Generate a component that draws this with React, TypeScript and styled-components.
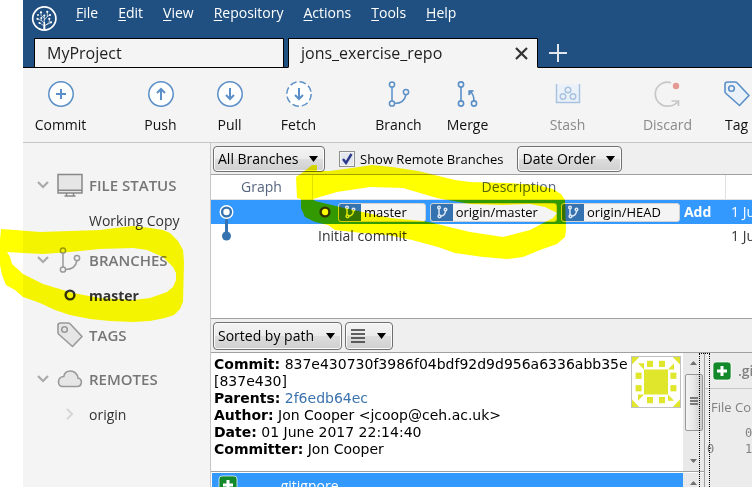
import React from "react";
import styled, { createGlobalStyle, css } from "styled-components";

const ui = '"Open Sans", "Noto Sans", sans-serif';

const Global = createGlobalStyle`
  *, *::before, *::after { box-sizing: border-box; }
  body { margin: 0; background: #fff; overflow: hidden; font-family: ${ui}; font-size: 14px; color: #1e1e1e; }
  button, select, input { font: inherit; color: inherit; margin: 0; }
  button { padding: 0; border: 0; background: none; }
  h2, p { margin: 0; padding: 0; }
  svg { display: block; flex: none; }
`;

/* ---------- frame ---------- */
const Page = styled.div`
  position: relative;
  height: 100vh;
  padding-left: 23px;
`;
const Window = styled.div`
  height: 100%;
  display: flex;
  flex-direction: column;
  overflow: hidden;
  background: #f4f4f4;
`;
const TitleBar = styled.header`
  flex: none;
  background: #205081;
  display: flex;
  flex-direction: column;
  height: 68px;
`;
const MenuBar = styled.nav`
  display: flex;
  height: 38px;
  padding-left: 8px;
  gap: 20px;
`;
const Logo = styled.div`
  width: 25px;
  padding-top: 5px;
`;
const MenuItem = styled.button`
  height: 26px;
  color: #fff;
  font-size: 14px;
  line-height: 26px;
  &::first-letter { text-decoration: underline; text-underline-offset: 2px; }
`;
const TabStrip = styled.div`
  flex: 1;
  display: flex;
  align-items: stretch;
  gap: 4px;
  padding-left: 11px;
  box-shadow: inset 0 -1px 0 #000;
`;
const Tab = styled.div<{ $active?: boolean }>`
  width: 250px;
  display: flex;
  align-items: center;
  justify-content: space-between;
  padding: 0 9px 0 12px;
  border: 1px solid #000;
  border-bottom-color: ${(p) => (p.$active ? "#f4f4f4" : "#000")};
  background: #f4f4f4;
`;
const TabLabel = styled.button`
  font-size: 16px;
  line-height: 24px;
`;
const AddTab = styled.button`
  width: 20px;
  margin-left: 6px;
  display: flex;
  align-items: center;
  justify-content: center;
`;

/* ---------- toolbar ---------- */
const Toolbar = styled.div`
  flex: none;
  display: flex;
  gap: 31px;
  height: 75px;
  padding-left: 3px;
  border-bottom: 1px solid #c6c6c6;
`;
const ToolGroup = styled.div`
  display: flex;
  flex: none;
`;
const Tool = styled.button`
  width: 69px;
  flex: none;
  display: flex;
  flex-direction: column;
  align-items: center;
  padding-top: 12px;
  gap: 7px;
  line-height: 20px;
  color: #111;
  &:disabled { color: #8a8a8a; }
`;

/* ---------- sidebar ---------- */
const Body = styled.div`
  flex: 1;
  min-height: 0;
  display: flex;
`;
const Sidebar = styled.aside`
  width: 188px;
  flex: none;
  display: flex;
  flex-direction: column;
  gap: 5px;
  padding: 24px 0 0 12px;
  border-right: 1px solid #c6c6c6;
  & > section:last-child { margin-top: 3px; }
`;
const SideHeader = styled.h2`
  display: grid;
  grid-template-columns: 16px 28px 1fr;
  column-gap: 5px;
  align-items: center;
  justify-items: center;
  height: 36px;
  font-size: 15px;
  font-weight: 600;
  color: #767676;
  & > span { justify-self: start; }
`;
const SideItem = styled.button<{ $current?: boolean }>`
  display: grid;
  grid-template-columns: 16px 28px 1fr;
  column-gap: 5px;
  align-items: center;
  justify-items: center;
  width: 100%;
  height: 34px;
  color: #333;
  font-weight: ${(p) => (p.$current ? 700 : 400)};
  & > span { grid-column: 3; justify-self: start; }
  & > svg { grid-column: 2; }
`;

/* ---------- main ---------- */
const Main = styled.main`
  flex: 1;
  min-width: 0;
  display: flex;
  flex-direction: column;
  background: #fff;
`;
const OptionBar = styled.div<{ $tall?: boolean }>`
  flex: none;
  display: flex;
  align-items: center;
  gap: ${(p) => (p.$tall ? "3px" : "14px")};
  height: ${(p) => (p.$tall ? "35px" : "32px")};
  padding-left: 2px;
  background: #efefef;
  border-bottom: 1px solid #a0a0a0;
  ${(p) => p.$tall && css`border-top: 1px solid #a0a0a0;`}
`;
const control = css`
  border: 1px solid #707070;
  border-radius: 4px;
  background: linear-gradient(#f4f4f4 0%, #ebebeb 49%, #dddddd 51%, #cfcfcf 100%);
  box-shadow: inset 0 0 0 1px #fbfbfb;
  color: #000;
`;
const DropDown = styled.span<{ $w: number }>`
  display: grid;
  width: ${(p) => p.$w}px;
  align-items: center;
  & > * { grid-area: 1 / 1; }
  & > svg { justify-self: end; margin-right: 7px; pointer-events: none; }
`;
const Select = styled.select<{ $tall?: boolean }>`
  ${control}
  appearance: none;
  width: 100%;
  height: ${(p) => (p.$tall ? "28px" : "26px")};
  padding: 0 4px;
  font-size: 14px;
`;
const ListButton = styled.button`
  ${control}
  display: flex;
  align-items: center;
  gap: 12px;
  height: 28px;
  padding: 0 6px 0 5px;
`;
const CheckLabel = styled.label`
  display: flex;
  align-items: center;
  gap: 5px;
  font-size: 13px;
  color: #000;
`;
const CheckBox = styled.span`
  display: grid;
  place-items: center;
  & > * { grid-area: 1 / 1; }
  & > svg { pointer-events: none; }
  input {
    appearance: none;
    width: 16px;
    height: 16px;
    border: 1px solid #8e8f8f;
    background: #e4e8ee;
    box-shadow: inset 0 0 0 1px #f4f4f4;
  }
`;

const ListArea = styled.div`
  flex: 1;
  min-height: 0;
  overflow: hidden;
`;
const CommitTable = styled.table`
  width: 100%;
  table-layout: fixed;
  border-collapse: separate;
  border-spacing: 0;
  th, td { padding: 0; overflow: hidden; white-space: nowrap; text-align: left; }
  th {
    height: 25px;
    border-right: 1px solid #e0e0e0;
    border-bottom: 1px solid #e0e0e0;
    font-weight: 400;
    text-align: center;
    color: #56657f;
    line-height: 24px;
  }
  th:last-child { border-right: 0; }
`;
const CommitRow = styled.tr<{ $selected?: boolean }>`
  background: ${(p) => (p.$selected ? "#3399ff" : "#fff")};
  color: ${(p) => (p.$selected ? "#fff" : "#333")};
  td { height: 24px; line-height: 24px; }
  td:last-child { padding-left: 5px; }
`;
const Message = styled.div<{ $refs?: boolean }>`
  display: flex;
  align-items: center;
  gap: 4px;
  height: 24px;
  padding-left: ${(p) => (p.$refs ? "6px" : "5px")};
  margin-right: 8px;
  overflow: hidden;
  strong { flex: none; }
  & > svg { margin-right: 3px; }
`;
const Ref = styled.span`
  flex: none;
  display: flex;
  align-items: center;
  gap: 3px;
  height: 19px;
  padding-right: 18px;
  border: 1px solid #d2d2d2;
  border-radius: 3px;
  background: #f4f4f4;
  color: #000;
  font-size: 13px;
  line-height: 17px;
  overflow: hidden;
`;
const RefIcon = styled.span`
  display: flex;
  align-items: center;
  justify-content: center;
  width: 22px;
  height: 19px;
  background: #3572b0;
`;

const LowerWrap = styled.div`
  position: relative;
  flex: none;
`;
const Lower = styled.div`
  display: flex;
  height: 134px;
`;
const DetailSide = styled.div`
  flex: 1;
  min-width: 0;
  display: flex;
  flex-direction: column;
  border-right: 1px solid #a0a0a0;
`;
const Detail = styled.section`
  flex: none;
  display: flex;
  height: 119px;
  border-bottom: 1px solid #a0a0a0;
`;
const DetailText = styled.div`
  flex: 1;
  min-width: 0;
  padding: 3px 0 0 3px;
  font-family: "DejaVu Sans", Verdana, sans-serif;
  font-size: 14px;
  line-height: 17px;
  color: #000;
  a { color: #3b73af; text-decoration: none; }
`;
const Avatar = styled.div`
  flex: none;
  width: 50px;
  height: 52px;
  margin: 3px 2px 0 0;
  border: 1px solid #c0c0c0;
`;
const ScrollBar = styled.div`
  flex: none;
  width: 21px;
  display: flex;
  flex-direction: column;
  align-items: center;
  justify-content: space-between;
  padding: 8px 1px;
  background: #e9e9e9;
`;
const Thumb = styled.div`
  width: 18px;
  height: 57px;
  margin: 4px 0 24px;
  display: flex;
  align-items: center;
  justify-content: center;
  border: 1px solid #989898;
  border-radius: 2px;
  background: linear-gradient(90deg, #f5f5f5, #e6e6e6 50%, #cbcbcb);
`;
const FileList = styled.div`
  flex: 1;
  display: flex;
  padding: 1px 0 0 1px;
  overflow: hidden;
`;
const FileRow = styled.button`
  flex: 1;
  height: 24px;
  display: flex;
  align-items: center;
  gap: 39px;
  padding-left: 6px;
  background: #3399ff;
  color: #fff;
  font-size: 14px;
`;
const DiffSide = styled.section`
  flex: none;
  width: 47px;
  background: #ececec;
  color: #808080;
  overflow: hidden;
  white-space: nowrap;
`;
const Splitter = styled.div`
  position: absolute;
  right: 42px;
  bottom: 0;
  width: 11px;
  height: 134px;
  border: 1px dotted #000;
  border-bottom: 0;
`;
const DiffHeader = styled.div`
  display: flex;
  align-items: center;
  gap: 6px;
  height: 36px;
  padding-left: 7px;
  border-bottom: 1px solid #c6c6c6;
  font-size: 14px;
  font-weight: 600;
`;
const DiffCaption = styled.p`
  padding: 8px 0 0 6px;
  font-size: 13px;
  line-height: 20px;
`;
const DiffLines = styled.div`
  display: grid;
  grid-template-columns: 38px 1fr;
  padding: 8px 0 0 2px;
  font-family: "DejaVu Sans Mono", monospace;
  font-size: 12px;
  line-height: 16px;
`;
const Marker = styled.svg`
  position: absolute;
  left: 0;
  top: 0;
  mix-blend-mode: multiply;
  pointer-events: none;
`;

/* ---------- icons ---------- */
const blue = "#5b8fc7";

const LogoIcon = () => (
  <svg width="26" height="27" viewBox="0 0 26 27" fill="none" stroke="#fff" strokeLinecap="round">
    <circle cx="13.300" cy="13.500" r="11.600" strokeWidth="1.700" />
    <g strokeWidth="0.800" strokeOpacity="0.850">
      <path d="M13.300 24V11M13.300 21L8.700 18M13.300 18l-3-2.500v-2M10.300 15.500L6.700 14M13.300 13L10 10.500v-3M13.300 15l3-3.500V7M13.300 21l5-3.500V14M15 20l5-2.500M16.300 11.500l2.500-1.500" />
    </g>
    <g fill="#fff" stroke="none">
      <circle cx="10" cy="7.300" r="1.100" /><circle cx="16.300" cy="6.800" r="1.100" />
      <circle cx="13.300" cy="10.500" r="1.100" /><circle cx="19" cy="10" r="1.100" />
      <circle cx="6.500" cy="13.800" r="1.100" /><circle cx="10.300" cy="13" r="1" />
      <circle cx="8.500" cy="18" r="1.100" /><circle cx="18.300" cy="13.800" r="1.100" />
      <circle cx="20" cy="17.300" r="1.100" /><circle cx="7" cy="10" r="0.900" />
      <path d="M12.700 17h1.300l.5 7.500h-2.300z" />
    </g>
  </svg>
);
const RoundIcon = ({ kind }: { kind: "plus" | "up" | "down" | "fetch" }) => (
  <svg width="28" height="28" viewBox="0 0 28 28" fill="none" stroke={blue}>
    <circle cx="14" cy="14" r="12.200" fill="#fff" strokeWidth="1.500" strokeDasharray={kind === "fetch" ? "6.600 3" : undefined} />
    <path
      strokeWidth="2"
      d={kind === "plus" ? "M14 9v10M9 14h10" : kind === "up" ? "M14 20V9.500M10 13l4-4 4 4" : "M14 8v10.500M10 15l4 4 4-4"}
    />
  </svg>
);
const BranchIcon = ({ color = blue }: { color?: string }) => (
  <svg width="28" height="28" viewBox="0 0 28 28" fill="none" stroke={color} strokeWidth="1.500">
    <circle cx="7" cy="4.500" r="2.600" />
    <circle cx="7" cy="23.500" r="2.600" />
    <circle cx="21" cy="12" r="2.600" />
    <path d="M7 7v14M9.600 23.500c6.400 0 10.400-3.500 11.400-9" />
  </svg>
);
const SmallBranchIcon = () => (
  <svg width="14" height="14" viewBox="0 0 14 14" fill="none" stroke="#dfe9f5" strokeWidth="1.500">
    <circle cx="4" cy="2.500" r="1.300" />
    <circle cx="4.500" cy="11.300" r="1.400" />
    <circle cx="10.500" cy="4.500" r="1.300" />
    <path d="M4 4v6M6 11c3-.300 4.300-2 4.500-5" />
  </svg>
);
const MergeIcon = () => (
  <svg width="28" height="28" viewBox="0 0 28 28" fill="none" stroke={blue} strokeWidth="1.600">
    <circle cx="7" cy="4.500" r="2.600" />
    <circle cx="7" cy="23.500" r="2.600" />
    <circle cx="20" cy="23.500" r="2.600" />
    <path d="M7 7v14M20 21c0-4-1-7-3.500-9.500" />
    <path d="M14.500 15.500v-5h5z" fill={blue} stroke="none" />
    <path d="M15.500 15v-4h4" />
  </svg>
);
const StashIcon = () => (
  <svg width="28" height="28" viewBox="0 0 28 28" fill="none" stroke="#a9c3df" strokeWidth="1.500">
    <path d="M2.500 4v18.500h23V4" fill="#eaf1f9" />
    <circle cx="14" cy="10" r="2.800" />
    <circle cx="9" cy="16.500" r="2.800" />
    <circle cx="19" cy="16.500" r="2.800" />
  </svg>
);
const DiscardIcon = () => (
  <svg width="28" height="28" viewBox="0 0 28 28" fill="none" stroke="#c6c6c6" strokeWidth="1.700">
    <path d="M17 2.700A12 12 0 1 0 15 26c4 0 7-2 9-4.500" />
    <path d="M17.500 21h7v5" />
    <circle cx="22" cy="6" r="3.200" fill="#e39a92" stroke="none" />
  </svg>
);
const TagIcon = ({ color = blue, fill = "#eaf1f9" }: { color?: string; fill?: string }) => (
  <svg width="28" height="28" viewBox="0 0 28 28" fill={fill} stroke={color} strokeWidth="1.600" strokeLinejoin="round">
    <path d="M2 4.500C2 3 3 2 4.500 2H12c1 0 1.600.300 2.300 1L26 15.500 16.500 25.500 3 13.500c-.700-.600-1-1.300-1-2.300z" />
    <circle cx="8.500" cy="8.500" r="2.800" />
  </svg>
);
const Chevron = () => (
  <svg width="12" height="8" viewBox="0 0 12 8" fill="none" stroke="#aaa" strokeWidth="2.200"><path d="M1 1l5 5 5-5" /></svg>
);
const ChevronRight = () => (
  <svg width="8" height="12" viewBox="0 0 8 12" fill="none" stroke="#d8d8d8" strokeWidth="2.200"><path d="M1 1l5 5-5 5" /></svg>
);
const MonitorIcon = () => (
  <svg width="26" height="24" viewBox="0 0 26 24" fill="#e6e6e6" stroke="#888" strokeWidth="1.500">
    <rect x="1" y="1.500" width="24" height="18.500" />
    <path d="M1 17.200h24M9.500 20v2.500M16.500 20v2.500M7.500 23h11" />
  </svg>
);
const CloudIcon = () => (
  <svg width="26" height="20" viewBox="0 0 26 20" fill="#e6e6e6" stroke="#999" strokeWidth="1.600">
    <path d="M5.500 17.500H20a4.300 4.300 0 0 0 1-8.500C20.500 4.500 17 2 13.500 2 9.800 2 7.300 4.200 6.800 7.500 3.500 7.500 1.500 10 1.500 12.800c0 2.700 1.700 4.700 4 4.700z" />
  </svg>
);
const RingIcon = ({ stroke = "#333", fill = "none" }: { stroke?: string; fill?: string }) => (
  <svg width="12" height="12" viewBox="0 0 12 12" fill={fill} stroke={stroke} strokeWidth="2.400"><circle cx="6" cy="6" r="4.400" /></svg>
);
const Arrow = () => <svg width="9" height="6" viewBox="0 0 9 6"><path d="M0 0h9L4.500 6z" fill="#000" /></svg>;
const AddedIcon = () => (
  <svg width="20" height="20" viewBox="0 0 20 20">
    <rect x="1" y="1" width="18" height="18" rx="3" fill="#14892c" stroke="#fff" strokeOpacity="0.700" />
    <path d="M10 5v10M5 10h10" stroke="#fff" strokeWidth="3" />
  </svg>
);
const ScrollArrow = ({ down }: { down?: boolean }) => (
  <svg width="7" height="4" viewBox="0 0 7 4"><path d={down ? "M0 0h7L3.500 4z" : "M0 4h7L3.500 0z"} fill="#707070" /></svg>
);
const Identicon = () => (
  <svg width="48" height="50" viewBox="0 0 8 8" preserveAspectRatio="none" fill="#e0e62b">
    <rect x="2" y="2" width="4" height="4" />
    {[0, 90, 180, 270].map((a) => (
      <g key={a} transform={`rotate(${a} 4 4)`}>
        <rect x="2.500" y="0.600" width="1" height="1" />
        <rect x="4.500" y="0.600" width="1" height="1" />
        <path d="M0 0h1.200L0 1.200zM1 1h1v1z" />
      </g>
    ))}
  </svg>
);

const refs = ["master", "origin/master", "origin/HEAD"];
const menus = ["File", "Edit", "View", "Repository", "Actions", "Tools", "Help"];

export default function App() {
  return (
    <Page>
      <Global />
      <Window>
        <TitleBar>
          <MenuBar>
            <Logo><LogoIcon /></Logo>
            {menus.map((m) => <MenuItem key={m}>{m}</MenuItem>)}
          </MenuBar>
          <TabStrip>
            <Tab><TabLabel>MyProject</TabLabel></Tab>
            <Tab $active>
              <TabLabel>jons_exercise_repo</TabLabel>
              <button aria-label="Close tab">
                <svg width="13" height="13" viewBox="0 0 13 13" stroke="#333" strokeWidth="2.200"><path d="M1 1l11 11M12 1L1 12" /></svg>
              </button>
            </Tab>
            <AddTab aria-label="New tab">
              <svg width="18" height="18" viewBox="0 0 18 18" stroke="#dfe6ee" strokeWidth="2"><path d="M9 0v18M0 9h18" /></svg>
            </AddTab>
          </TabStrip>
        </TitleBar>

        <Toolbar>
          <ToolGroup><Tool><RoundIcon kind="plus" />Commit</Tool></ToolGroup>
          <ToolGroup>
            <Tool><RoundIcon kind="up" />Push</Tool>
            <Tool><RoundIcon kind="down" />Pull</Tool>
            <Tool><RoundIcon kind="fetch" />Fetch</Tool>
          </ToolGroup>
          <ToolGroup>
            <Tool><BranchIcon />Branch</Tool>
            <Tool><MergeIcon />Merge</Tool>
          </ToolGroup>
          <ToolGroup><Tool disabled><StashIcon />Stash</Tool></ToolGroup>
          <ToolGroup>
            <Tool disabled><DiscardIcon />Discard</Tool>
            <Tool><TagIcon />Tag</Tool>
          </ToolGroup>
        </Toolbar>

        <Body>
          <Sidebar>
            <section>
              <SideHeader><Chevron /><MonitorIcon /><span>FILE STATUS</span></SideHeader>
              <SideItem><span>Working Copy</span></SideItem>
            </section>
            <section>
              <SideHeader><Chevron /><BranchIcon color="#999" /><span>BRANCHES</span></SideHeader>
              <SideItem $current><RingIcon /><span>master</span></SideItem>
            </section>
            <section>
              <SideHeader><i /><TagIcon color="#999" fill="#e6e6e6" /><span>TAGS</span></SideHeader>
            </section>
            <section>
              <SideHeader><Chevron /><CloudIcon /><span>REMOTES</span></SideHeader>
              <SideItem><ChevronRight /><span>origin</span></SideItem>
            </section>
          </Sidebar>

          <Main>
            <OptionBar>
              <DropDown $w={112}>
                <Select aria-label="Branch filter"><option>All Branches</option></Select><Arrow />
              </DropDown>
              <CheckLabel>
                <CheckBox>
                  <input type="checkbox" defaultChecked />
                  <svg width="12" height="12" viewBox="0 0 12 12" fill="none" stroke="#2b3a8c" strokeWidth="2.400"><path d="M2 6l3 4 5.500-9" /></svg>
                </CheckBox>
                Show Remote Branches
              </CheckLabel>
              <DropDown $w={105}>
                <Select aria-label="Order"><option>Date Order</option></Select><Arrow />
              </DropDown>
            </OptionBar>

            <ListArea>
              <CommitTable>
                <colgroup><col width="102" /><col /><col width="26" /></colgroup>
                <thead><tr><th>Graph</th><th>Description</th><th aria-label="Date" /></tr></thead>
                <tbody>
                  <CommitRow $selected>
                    <td>
                      <svg width="32" height="24" viewBox="0 0 32 24">
                        <path d="M15.500 12v12" stroke="#3572b0" strokeWidth="3" />
                        <circle cx="15.500" cy="12" r="7" fill="#fff" />
                        <circle cx="15.500" cy="12" r="4.400" fill="#fff" stroke="#3572b0" strokeWidth="2.400" />
                      </svg>
                    </td>
                    <td>
                      <Message $refs>
                        <RingIcon stroke="#333" fill="#fff" />
                        {refs.map((r) => (
                          <Ref key={r}><RefIcon><SmallBranchIcon /></RefIcon>{r}</Ref>
                        ))}
                        <strong>Add</strong>
                      </Message>
                    </td>
                    <td>1 Ju</td>
                  </CommitRow>
                  <CommitRow>
                    <td>
                      <svg width="32" height="24" viewBox="0 0 32 24">
                        <path d="M15.500 0v12" stroke="#3572b0" strokeWidth="3" />
                        <circle cx="15.500" cy="12" r="4.500" fill="#3572b0" />
                      </svg>
                    </td>
                    <td><Message>Initial commit</Message></td>
                    <td>1 Ju</td>
                  </CommitRow>
                </tbody>
              </CommitTable>
            </ListArea>

            <OptionBar $tall>
              <DropDown $w={129}>
                <Select $tall aria-label="File sorting"><option>Sorted by path</option></Select><Arrow />
              </DropDown>
              <ListButton aria-label="View mode">
                <svg width="14" height="14" viewBox="0 0 14 14" stroke="#333" strokeWidth="1.400"><path d="M0 1h14M0 5h14M0 9h14M0 13h14" /></svg>
                <Arrow />
              </ListButton>
            </OptionBar>

            <LowerWrap>
              <Lower>
                <DetailSide>
                  <Detail>
                    <DetailText>
                      <p><b>Commit:</b> <span>837e430730f3986f04bdf92d9d956a6336abb35e</span> <span>[837e430]</span></p>
                      <p><b>Parents:</b> <a href="#parent">2f6edb64ec</a></p>
                      <p><b>Author:</b> Jon Cooper &lt;jcoop@ceh.ac.uk&gt;</p>
                      <p><b>Date:</b> 01 June 2017 22:14:40</p>
                      <p><b>Committer:</b> Jon Cooper</p>
                    </DetailText>
                    <Avatar><Identicon /></Avatar>
                    <ScrollBar>
                      <ScrollArrow />
                      <Thumb>
                        <svg width="8" height="10" viewBox="0 0 8 10" stroke="#555" strokeWidth="1.400"><path d="M0 1h8M0 4h8M0 7h8" /></svg>
                      </Thumb>
                      <ScrollArrow down />
                    </ScrollBar>
                  </Detail>
                  <FileList>
                    <FileRow><AddedIcon />.gitignore</FileRow>
                    <ScrollBar><ScrollArrow /></ScrollBar>
                  </FileList>
                </DetailSide>
                <DiffSide>
                  <DiffHeader><AddedIcon />.gi</DiffHeader>
                  <DiffCaption>File Co</DiffCaption>
                  <DiffLines><span /><span>0</span><span>0</span><span>1</span></DiffLines>
                </DiffSide>
              </Lower>
              <Splitter />
            </LowerWrap>
          </Main>
        </Body>
      </Window>

      <Marker width="752" height="487" viewBox="0 0 752 487" fill="#ffff00" fillRule="evenodd" aria-hidden="true">
        <path d="M1 229L15 230 40 232 70 231 100 230 115 228 133 226 150 228 163 230 170 233 178 241 183 250 184 262 183 302 180 309 174 315 165 318 150 321 133 322 110 321 90 319 70 315 55 310 40 303 23 297 15 290 6 285 2 275 0 265V240zM7 252L10 257 12 264 23 274 43 284 73 293 100 298 133 300 150 298 167 292 173 287 176 280V273L173 267 163 257 147 250 133 248 100 249 70 252 43 254 23 253z" />
        <path d="M296 177L302 173 312 165H317V171H330L352 168 372 165 392 167 418 171 455 180 470 182 507 183 537 185 553 189 561 194 565 200 566 230 565 237 557 244 540 250 523 257 507 259 483 257 455 253 438 247 412 240 388 235 362 233 335 230 328 225 315 222 305 217 301 208V199L297 198zM313 199L337 192 370 187 403 188 437 198 470 204 503 205 530 204 545 207 557 213 553 218 530 230 503 237 470 232 433 223 423 221 390 218 367 213 340 207 315 201z" />
      </Marker>
    </Page>
  );
}
